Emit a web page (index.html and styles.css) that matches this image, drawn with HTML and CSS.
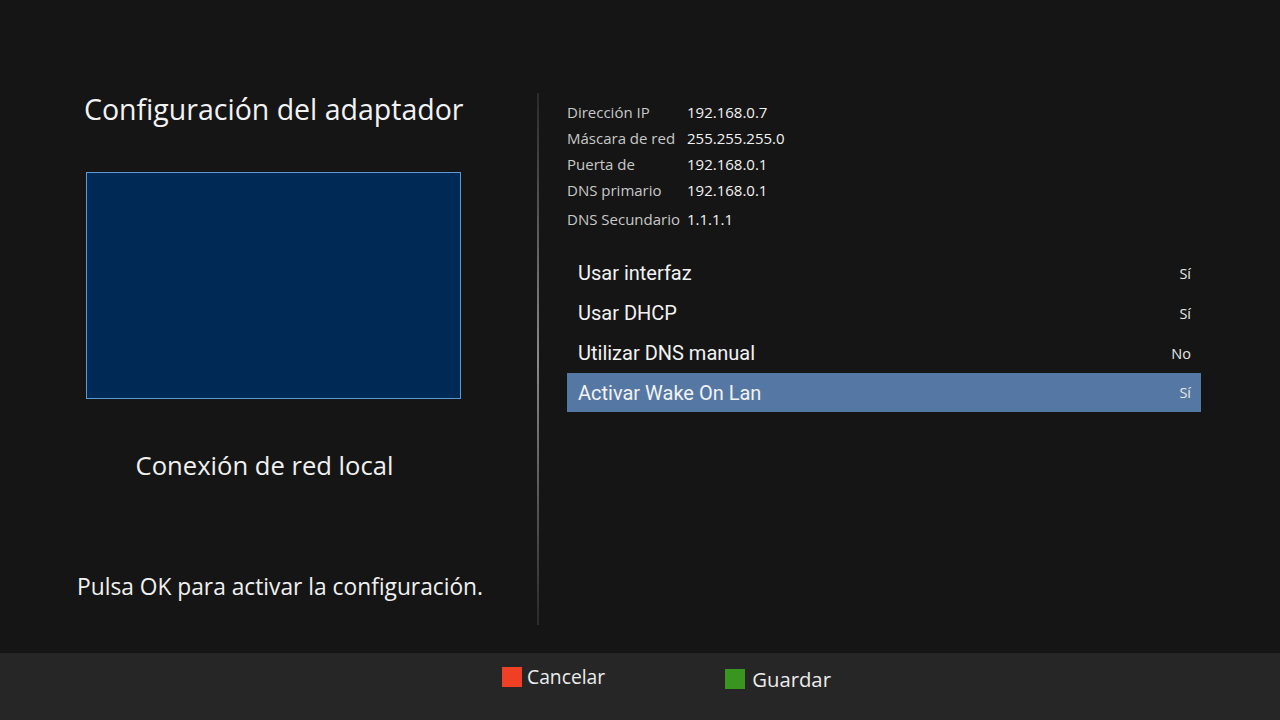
FILE: index.html
```html
<!DOCTYPE html>
<html lang="es">
<head>
  <meta charset="UTF-8" />
  <title>Configuración del adaptador</title>
  <link rel="stylesheet" href="styles.css">
</head>
<body>
  <div class="screen">
    <div class="left">
      <h1>Configuración del adaptador</h1>
      <div class="preview"></div>
      <div class="adapter-name">Conexión de red local</div>
      <div class="hint">Pulsa OK para activar la configuración.</div>
    </div>
    <div class="divider"></div>
    <div class="right">
      <div class="info">
        <div class="info-row"><span class="label">Dirección IP</span><span>192.168.0.7</span></div>
        <div class="info-row"><span class="label">Máscara de red</span><span>255.255.255.0</span></div>
        <div class="info-row"><span class="label">Puerta de</span><span>192.168.0.1</span></div>
        <div class="info-row"><span class="label">DNS primario</span><span>192.168.0.1</span></div>
        <div class="info-row last"><span class="label">DNS Secundario</span><span>1.1.1.1</span></div>
      </div>
      <ul class="options">
        <li><span>Usar interfaz</span><span class="value">Sí</span></li>
        <li><span>Usar DHCP</span><span class="value">Sí</span></li>
        <li><span>Utilizar DNS manual</span><span class="value">No</span></li>
        <li class="selected"><span>Activar Wake On Lan</span><span class="value">Sí</span></li>
      </ul>
    </div>
  </div>
  <div class="footer">
    <div class="key"><span class="swatch red"></span>Cancelar</div>
    <div class="key green-key"><span class="swatch green"></span>Guardar</div>
  </div>
</body>
</html>
```

FILE: styles.css
```css
* { box-sizing: border-box; }
body {
  margin: 0;
  width: 1280px;
  height: 720px;
  background: #151515;
  color: #f0f0f0;
  font-family: "Open Sans", "Noto Sans", sans-serif;
  overflow: hidden;
}
.screen {
  display: flex;
  height: 653px;
  padding-top: 93px;
}
.left {
  width: 453px;
  margin-left: 77px;
  display: flex;
  flex-direction: column;
}
h1 {
  margin: 0 0 0 7px;
  font-size: 28.5px;
  font-weight: 400;
  line-height: 32px;
  color: #f2f2f2;
}
.preview {
  margin: 47px 0 0 9px;
  width: 375px;
  height: 227px;
  background: #002a56;
  border: 1px solid #5b9bd3;
}
.adapter-name {
  margin-top: 52px;
  width: 375px;
  text-align: center;
  font-size: 25.6px;
  line-height: 30px;
}
.hint {
  margin-top: 91px;
  font-size: 22.75px;
  line-height: 30px;
}
.divider {
  width: 2px;
  height: 532px;
  margin-left: 7px;
  background: linear-gradient(#2a2a2a, #8a8a8a 50%, #2a2a2a);
}
.right {
  margin-left: 28px;
  width: 634px;
}
.info {
  padding-top: 6px;
  font-size: 15px;
}
.info-row {
  display: flex;
  height: 26px;
  align-items: center;
  color: #f2f2f2;
}
.info-row .label {
  width: 120px;
  color: #c8c8c8;
}
.info-row.last { height: 29px; padding-top: 3px; }
.options {
  list-style: none;
  margin: 21px 0 0;
  padding: 0;
}
.options li {
  display: flex;
  justify-content: space-between;
  align-items: center;
  height: 40px;
  padding: 0 10px 0 11px;
  font-family: Roboto, "Open Sans", sans-serif;
  font-size: 20px;
  color: #f2f2f2;
}
.options li.selected {
  height: 39px;
  background: #5577a3;
}
.options .value {
  font-family: "Open Sans", sans-serif;
  font-size: 14.5px;
  color: #e8e8e8;
}
.footer {
  height: 67px;
  background: #262626;
  display: flex;
  padding-left: 502px;
  padding-top: 13px;
  font-size: 19.3px;
  color: #ececec;
}
.key {
  display: flex;
  align-items: center;
  height: 21px;
}
.green-key { margin-left: 120px; margin-top: 2px; font-size: 20.3px; }
.swatch {
  width: 20px;
  height: 20px;
  margin-right: 5px;
}
.green-key .swatch { margin-right: 7px; }
.red { background: #ef3f24; }
.green { background: #3a9520; }
```
